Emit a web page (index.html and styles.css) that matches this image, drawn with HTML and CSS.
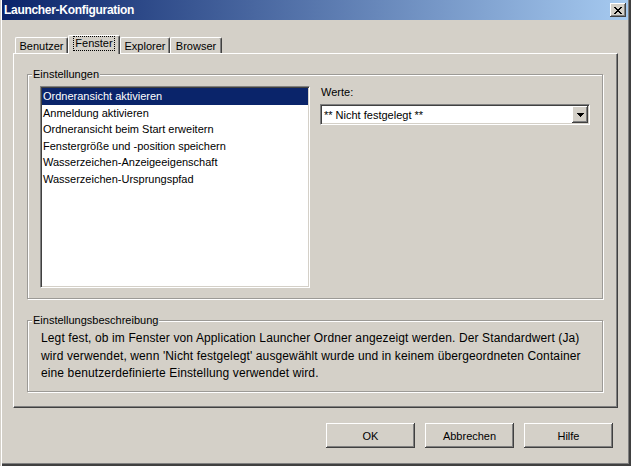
FILE: index.html
```html
<!DOCTYPE html>
<html lang="de">
<head>
<meta charset="utf-8">
<title>Launcher-Konfiguration</title>
<link rel="stylesheet" href="styles.css">
</head>
<body>
<div class="window">
  <div class="titlebar">
    <span class="title">Launcher-Konfiguration</span>
    <span class="close-btn">
      <svg width="8" height="7" viewBox="0 0 8 7" shape-rendering="crispEdges">
        <path d="M0 0h2v1H0zM6 0h2v1H6zM1 1h2v1H1zM5 1h2v1H5zM2 2h4v1H2zM3 3h2v1H3zM2 4h4v1H2zM1 5h2v1H1zM5 5h2v1H5zM0 6h2v1H0zM6 6h2v1H6z" fill="#000"/>
      </svg>
    </span>
  </div>

  <div class="tabs">
    <div class="tab tab-benutzer">Benutzer</div>
    <div class="tab tab-fenster selected"><span class="focus">Fenster</span></div>
    <div class="tab tab-explorer">Explorer</div>
    <div class="tab tab-browser">Browser</div>
  </div>

  <div class="panel">
    <div class="group settings">
      <div class="group-title">Einstellungen</div>
      <div class="settings-body">
        <ul class="listbox">
          <li class="item selected">Ordneransicht aktivieren</li>
          <li class="item">Anmeldung aktivieren</li>
          <li class="item">Ordneransicht beim Start erweitern</li>
          <li class="item">Fenstergröße und -position speichern</li>
          <li class="item">Wasserzeichen-Anzeigeeigenschaft</li>
          <li class="item">Wasserzeichen-Ursprungspfad</li>
        </ul>
        <div class="values">
          <div class="values-label">Werte:</div>
          <div class="combo">
            <span class="combo-text">** Nicht festgelegt **</span>
            <span class="combo-btn">
              <svg width="7" height="4" viewBox="0 0 7 4" shape-rendering="crispEdges">
                <path d="M0 0h7v1H0zM1 1h5v1H1zM2 2h3v1H2zM3 3h1v1H3z" fill="#000"/>
              </svg>
            </span>
          </div>
        </div>
      </div>
    </div>

    <div class="group desc">
      <div class="group-title">Einstellungsbeschreibung</div>
      <p class="desc-text">Legt fest, ob im Fenster von Application Launcher Ordner angezeigt werden. Der Standardwert (Ja)<br>wird verwendet, wenn 'Nicht festgelegt' ausgewählt wurde und in keinem übergeordneten Container<br>eine benutzerdefinierte Einstellung verwendet wird.</p>
    </div>
  </div>

  <div class="buttons">
    <button class="btn">OK</button>
    <button class="btn">Abbrechen</button>
    <button class="btn">Hilfe</button>
  </div>
</div>
</body>
</html>
```

FILE: styles.css
```css
* {
  box-sizing: border-box;
}

html, body {
  margin: 0;
  padding: 0;
  background: #d4d0c8;
}

body {
  font-family: "Liberation Sans", Arial, sans-serif;
  font-size: 11px;
  color: #000;
}

.window {
  width: 631px;
  height: 466px;
  background: #d4d0c8;
  overflow: hidden;
  box-shadow:
    inset 1px 0 0 #d4d0c8,
    inset 2px 0 0 #ffffff,
    inset -2px -2px 0 #404040,
    inset -3px -3px 0 #808080;
}

/* Title bar */
.titlebar {
  height: 20px;
  margin: 0 3px 0 2px;
  padding: 0 2px 0 2px;
  display: flex;
  align-items: center;
  justify-content: space-between;
  background: linear-gradient(to right, #0a246a, #a6caf0);
}

.title {
  color: #fff;
  font-weight: bold;
  font-size: 12px;
  letter-spacing: -0.3px;
  line-height: 14px;
}

.close-btn {
  width: 16px;
  height: 14px;
  display: flex;
  align-items: center;
  justify-content: center;
  background: #d4d0c8;
  box-shadow:
    inset -1px -1px 0 #404040,
    inset 1px 1px 0 #ffffff,
    inset -2px -2px 0 #808080;
}

.close-btn svg {
  display: block;
}

/* Tabs */
.tabs {
  display: flex;
  align-items: flex-end;
  height: 18px;
  margin: 15px 0 0 15px;
}

.tab {
  height: 16px;
  padding-top: 2px;
  line-height: 13px;
  text-align: center;
  background: #d4d0c8;
  border-top: 1px solid #ffffff;
  border-left: 1px solid #ffffff;
  border-right: 1px solid #404040;
  border-radius: 2px 2px 0 0;
  box-shadow: inset -1px 0 0 #808080;
  white-space: nowrap;
}

.tab-benutzer { width: 53px; }
.tab-fenster { width: 52px; }
.tab-explorer { width: 50px; }
.tab-browser { width: 52px; }

.tab.selected {
  height: 19px;
  margin-bottom: -1px;
  padding-top: 1px;
  position: relative;
  z-index: 1;
}

.focus {
  display: inline-block;
  padding: 0 1px;
  line-height: 13px;
  outline: 1px dotted #000;
  outline-offset: 0;
}

/* Tab panel */
.panel {
  width: 605px;
  height: 355px;
  margin-left: 13px;
  padding: 20px 0 0 13px;
  border-top: 1px solid #ffffff;
  border-left: 1px solid #ffffff;
  border-right: 1px solid #404040;
  border-bottom: 1px solid #404040;
  box-shadow: inset -1px -1px 0 #808080;
}

/* Etched group boxes */
.group {
  width: 576px;
  border: 1px solid #9c9a96;
  box-shadow: 1px 1px 0 #ffffff, inset 1px 1px 0 #ffffff;
}

.group.settings {
  height: 225px;
}

.group.desc {
  height: 72px;
  margin-top: 21px;
}

.group-title {
  width: fit-content;
  margin: -7px 0 0 4px;
  padding: 0 1px;
  line-height: 13px;
  background: #d4d0c8;
}

.settings-body {
  display: flex;
  gap: 10px;
  margin-top: 5px;
  padding: 0 12px;
}

.listbox {
  width: 270px;
  height: 202px;
  margin: 0;
  list-style: none;
  background: #ffffff;
  border: 1px solid;
  border-color: #808080 #ffffff #ffffff #808080;
  box-shadow: inset 1px 1px 0 #404040, inset -1px -1px 0 #d4d0c8;
  padding: 1px;
}

.item {
  line-height: 16.6px;
  padding-left: 1px;
  white-space: nowrap;
}

.item.selected {
  background: #0a246a;
  color: #ffffff;
}

.values {
  flex: 1;
}

.values-label {
  line-height: 13px;
  padding-left: 1px;
}

.combo {
  height: 21px;
  margin-top: 5px;
  display: flex;
  align-items: center;
  background: #ffffff;
  border: 1px solid;
  border-color: #808080 #ffffff #ffffff #808080;
  box-shadow: inset 1px 1px 0 #404040, inset -1px -1px 0 #d4d0c8;
  padding: 1px;
}

.combo-text {
  flex: 1;
  padding-left: 2px;
  white-space: nowrap;
}

.combo-btn {
  width: 16px;
  height: 17px;
  display: flex;
  align-items: center;
  justify-content: center;
  background: #d4d0c8;
  box-shadow:
    inset -1px -1px 0 #404040,
    inset 1px 1px 0 #ffffff,
    inset -2px -2px 0 #808080;
}

.combo-btn svg {
  display: block;
}

.desc-text {
  margin: 3px 0 0 0;
  padding-left: 13px;
  font-size: 12px;
  letter-spacing: 0.12px;
  line-height: 17.5px;
  white-space: nowrap;
}

/* Dialog buttons */
.buttons {
  display: flex;
  justify-content: flex-end;
  gap: 10px;
  margin-top: 15px;
  padding-right: 18px;
}

.btn {
  width: 89px;
  height: 25px;
  padding: 0;
  border: none;
  background: #d4d0c8;
  font-family: "Liberation Sans", Arial, sans-serif;
  font-size: 11px;
  color: #000;
  box-shadow:
    inset -1px -1px 0 #404040,
    inset 1px 1px 0 #ffffff,
    inset -2px -2px 0 #808080;
}
```
